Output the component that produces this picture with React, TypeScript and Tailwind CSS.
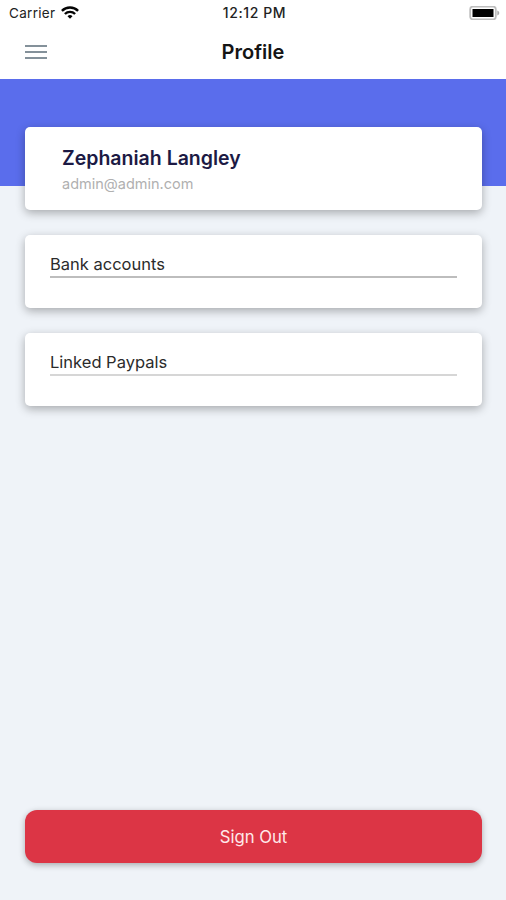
const sections = [
    { title: "Bank accounts", line: "border-[#bdbdbd]" },
    { title: "Linked Paypals", line: "border-[#d6d6d6]" },
];

function StatusBar() {
    return (
        <div className="grid h-[26px] grid-cols-3 items-center pl-[9px] pr-[6px] text-[13.5px] text-[#222]">
            <div className="flex items-center gap-[6px]">
                <span className="pt-px tracking-[0.3px]">Carrier</span>
                <svg width="18" height="13" viewBox="0 0 18 13" className="mb-px shrink-0" aria-hidden="true">
                    <g fill="none" stroke="#050505" strokeWidth="2.4">
                        <path d="M.9 4.8a11.6 11.6 0 0 1 16.2 0" />
                        <path d="M3.9 8a7.3 7.3 0 0 1 10.2 0" />
                    </g>
                    <path d="M9 12.8 6.5 10.3a3.6 3.6 0 0 1 5 0Z" fill="#050505" />
                </svg>
            </div>
            <span className="pb-px text-center text-[14px] font-medium tracking-[0.6px]">12:12 PM</span>
            <svg width="31" height="14" viewBox="0 0 31 14" className="justify-self-end" aria-hidden="true">
                <rect x="1.2" y=".7" width="25.6" height="12.6" rx="2.5" fill="#fff" stroke="#bdbdbd" strokeWidth="1.8" />
                <rect x="3.5" y="3" width="21" height="8" fill="#000" />
                <path d="M28.3 4.5c2.6 1 2.6 4 0 5Z" fill="#aaa" />
            </svg>
        </div>
    );
}

function NavBar() {
    return (
        <div className="grid h-[53px] grid-cols-[36px_1fr_36px] items-center px-[25px] pb-px">
            <button type="button" aria-label="Menu" className="flex w-[22px] flex-col gap-1">
                <span className="h-0.5 bg-[#84919a]" />
                <span className="h-0.5 bg-[#84919a]" />
                <span className="h-0.5 bg-[#84919a]" />
            </button>
            <h1 className="text-center text-[20px] font-semibold text-[#151515]">Profile</h1>
        </div>
    );
}

export default function App() {
    return (
        <div className="flex h-[900px] w-full flex-col overflow-hidden bg-[#eff3f8] font-['Inter',sans-serif]">
            <header className="bg-white">
                <StatusBar />
                <NavBar />
            </header>

            <div className="h-[107px] shrink-0 bg-[#5a6dec]" />

            <main className="-mt-[59px] flex flex-1 flex-col px-[25px] pr-6 pb-[37px]">
                <section className="h-[83px] rounded-[5px] bg-white pt-[18px] pl-[37px] shadow-[0_3px_10px_rgba(0,0,0,0.3)]">
                    <h2 className="text-[19.5px] leading-[26px] font-semibold text-[#1c1a44]">Zephaniah Langley</h2>
                    <p className="text-[14.5px] leading-[26px] text-[#b0b0b0]">admin@admin.com</p>
                </section>

                {sections.map(({ title, line }) => (
                    <section
                        key={title}
                        className="mt-[24.5px] h-[73.5px] rounded-[5px] bg-white px-[25px] pt-[17px] shadow-[0_3px_10px_rgba(0,0,0,0.3)]"
                    >
                        <h3 className={`h-[26px] border-b-2 text-[16.5px] leading-[24px] text-[#2b2b2b] ${line}`}>
                            {title}
                        </h3>
                    </section>
                ))}

                <button
                    type="button"
                    className="mt-auto h-[53px] rounded-xl bg-[#dc3545] pt-0.5 text-[16.7px] text-[#ffe9ea] shadow-[0_2px_6px_rgba(0,0,0,0.3)]"
                >
                    Sign Out
                </button>
            </main>
        </div>
    );
}
